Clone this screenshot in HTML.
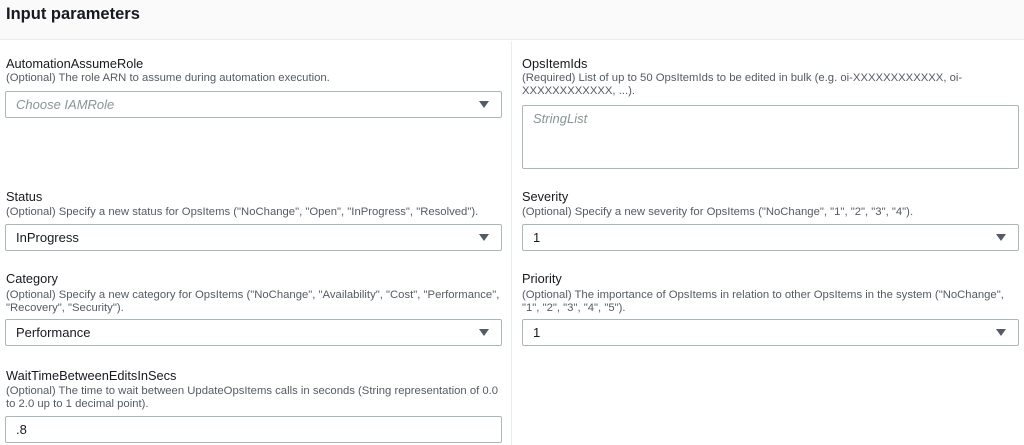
<!DOCTYPE html>
<html><head><meta charset="utf-8"><style>
*{margin:0;padding:0;box-sizing:border-box}
body{width:1024px;height:445px;overflow:hidden;background:#fff;font-family:"Liberation Sans",Arial,sans-serif;color:#16191f;position:relative}
.hdr{position:absolute;left:0;top:0;width:1024px;height:40px;background:#fafafa;border-bottom:1px solid #eaeded}
.hdr h1{position:absolute;left:6px;top:5px;font-size:16.5px;font-weight:bold;color:#16191f}
.div{position:absolute;left:511px;top:41px;width:1px;height:404px;background:#eaeded}
.l{position:absolute;font-size:12.8px;color:#16191f;white-space:nowrap}
.d{position:absolute;font-size:11.3px;color:#545b64;line-height:13px;width:505px;white-space:nowrap}
.b{position:absolute;height:27px;border:1px solid #aab7b8;border-radius:2px;background:#fff;font-size:13px;padding-left:10px;line-height:25px}
.ph{color:#879596;font-style:italic}
.a{position:absolute;right:12px;top:9px;width:0;height:0;border-left:5px solid transparent;border-right:5px solid transparent;border-top:7px solid #545b64}
</style></head><body>
<div class="hdr"><h1>Input parameters</h1></div>
<div class="div"></div>

<div class="l" style="left:6px;top:56px">AutomationAssumeRole</div>
<div class="d" style="left:6px;top:72px">(Optional) The role ARN to assume during automation execution.</div>
<div class="b" style="left:5px;top:91px;width:497px"><span class="ph">Choose IAMRole</span><span class="a"></span></div>

<div class="l" style="left:522px;top:56px">OpsItemIds</div>
<div class="d" style="left:522px;top:72px">(Required) List of up to 50 OpsItemIds to be edited in bulk (e.g. oi-XXXXXXXXXXXX, oi-<br>XXXXXXXXXXXX, ...).</div>
<div class="b" style="left:522px;top:105px;width:497px;height:64px;line-height:26px"><span class="ph">StringList</span></div>

<div class="l" style="left:6px;top:189px">Status</div>
<div class="d" style="left:6px;top:206px">(Optional) Specify a new status for OpsItems ("NoChange", "Open", "InProgress", "Resolved").</div>
<div class="b" style="left:5px;top:224px;width:497px">InProgress<span class="a"></span></div>

<div class="l" style="left:522px;top:189px">Severity</div>
<div class="d" style="left:522px;top:206px">(Optional) Specify a new severity for OpsItems ("NoChange", "1", "2", "3", "4").</div>
<div class="b" style="left:522px;top:224px;width:497px">1<span class="a"></span></div>

<div class="l" style="left:6px;top:271px">Category</div>
<div class="d" style="left:6px;top:289px">(Optional) Specify a new category for OpsItems ("NoChange", "Availability", "Cost", "Performance",<br>"Recovery", "Security").</div>
<div class="b" style="left:5px;top:319px;width:497px">Performance<span class="a"></span></div>

<div class="l" style="left:522px;top:271px">Priority</div>
<div class="d" style="left:522px;top:289px">(Optional) The importance of OpsItems in relation to other OpsItems in the system ("NoChange",<br>"1", "2", "3", "4", "5").</div>
<div class="b" style="left:522px;top:319px;width:497px">1<span class="a"></span></div>

<div class="l" style="left:6px;top:368px">WaitTimeBetweenEditsInSecs</div>
<div class="d" style="left:6px;top:385px">(Optional) The time to wait between UpdateOpsItems calls in seconds (String representation of 0.0<br>to 2.0 up to 1 decimal point).</div>
<div class="b" style="left:5px;top:416px;width:497px">.8</div>
</body></html>
